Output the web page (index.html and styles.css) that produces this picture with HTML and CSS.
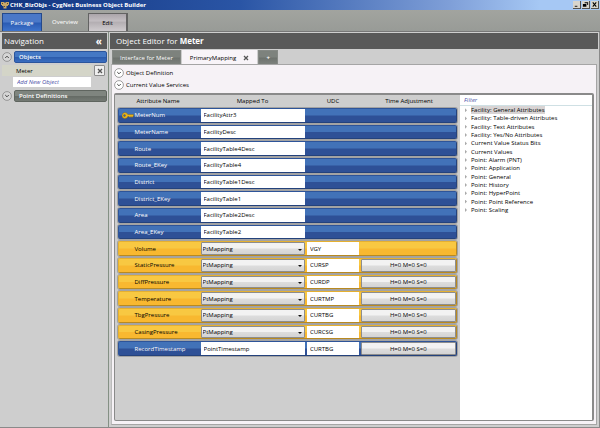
FILE: index.html
```
<!DOCTYPE html>
<html lang="en">
    <head>
        <meta charset="utf-8">
        <title>CHK_BizObjs - CygNet Business Object Builder</title>
        <link rel="stylesheet" href="styles.css">
    </head>
    <body>
        <header class="titlebar">
            <svg class="appicon" viewBox="0 0 8 8"><path d="M0 1h3.500v3H0zM4.500 1H8v3H4.500zM3 2h2v2H3zM1 4h6v1H5.500v2.500h-3V5H1z" fill="#c9a868"/><path d="M1 2h1v1H1zM6 2h1v1H6zM3 5h1v1H3z" fill="#6b4a2a"/></svg>
            <h1>CHK_BizObjs - CygNet Business Object Builder</h1>
            <div class="winbuttons">
                <button type="button" aria-label="Minimize"><svg viewBox="0 0 8 7"><path d="M2 5h3v1H2z"/></svg></button>
                <button type="button" aria-label="Restore"><svg viewBox="0 0 8 7"><path d="M3 1h4v3H6V2H3zM1 3h4v3H1z"/></svg></button>
                <button type="button" aria-label="Close"><svg viewBox="0 0 8 7"><path d="M2 1l4 5M6 1L2 6" stroke="#000" stroke-width="1.2"/></svg></button>
            </div>
        </header>
        <nav class="menu">
            <button type="button" class="package">Package</button>
            <button type="button">Overview</button>
            <button type="button" class="current">Edit</button>
        </nav>
        <div class="work">
            <aside class="navigation">
                <h2 class="heading">Navigation <button type="button" class="collapse" aria-label="Collapse">«</button></h2>
                <div class="navbody">
                    <div class="group">
                        <svg class="round" viewBox="0 0 10 10"><circle cx="5" cy="5" r="4.4"/><path d="M3.2 6L5 4.2 6.8 6"/></svg>
                        <button type="button" class="bar blue">Objects</button>
                    </div>
                    <div class="object">
                        <span>Meter</span>
                        <button type="button" aria-label="Remove Meter"><svg class="cross" viewBox="0 0 6 6"><path d="M1 1l4 4M5 1L1 5"/></svg></button>
                    </div>
                    <input class="addnew" type="text" placeholder="Add New Object" aria-label="Add New Object">
                    <div class="group">
                        <svg class="round" viewBox="0 0 10 10"><circle cx="5" cy="5" r="4.4"/><path d="M3.2 4L5 5.8 6.8 4"/></svg>
                        <button type="button" class="bar gray">Point Definitions</button>
                    </div>
                </div>
            </aside>
            <main class="editor">
                <h2 class="heading">Object Editor for&nbsp;<b>Meter</b></h2>
                <div class="tabs">
                    <button type="button" class="tab">Interface for Meter</button>
                    <button type="button" class="tab active">PrimaryMapping <svg class="cross" viewBox="0 0 6 6"><path d="M1 1l4 4M5 1L1 5"/></svg></button>
                    <button type="button" class="tab add">+</button>
                </div>
                <div class="panel">
                    <button type="button" class="expander"><svg class="round" viewBox="0 0 10 10"><circle cx="5" cy="5" r="4.4"/><path d="M3.2 4L5 5.8 6.8 4"/></svg>Object Definition</button>
                    <button type="button" class="expander"><svg class="round" viewBox="0 0 10 10"><circle cx="5" cy="5" r="4.4"/><path d="M3.2 4L5 5.8 6.8 4"/></svg>Current Value Services</button>
                    <div class="box">
                        <table class="mapping">
                            <thead>
                                <tr><th>Attribute Name</th><th>Mapped To</th><th>UDC</th><th>Time Adjustment</th></tr>
                            </thead>
                            <tbody>
                                <tr class="fac"><td><svg class="key" viewBox="0 0 12 7"><path d="M3 .5a3 3 0 1 0 2.800 4H7l1 1 1-1 1 1 1.500-1.500V2.500H5.800A3 3 0 0 0 3 .5zM2.500 2.500a1 1 0 1 1 0 2 1 1 0 0 1 0-2z" fill="#e9b51c" stroke="#7b5c14" stroke-width=".4" fill-rule="evenodd"/></svg><label for="m1">MeterNum</label></td><td><input id="m1" type="text" value="FacilityAttr3"></td><td></td><td></td></tr>
                                <tr class="fac"><td><label for="m2">MeterName</label></td><td><input id="m2" type="text" value="FacilityDesc"></td><td></td><td></td></tr>
                                <tr class="fac"><td><label for="m3">Route</label></td><td><input id="m3" type="text" value="FacilityTable4Desc"></td><td></td><td></td></tr>
                                <tr class="fac"><td><label for="m4">Route_EKey</label></td><td><input id="m4" type="text" value="FacilityTable4"></td><td></td><td></td></tr>
                                <tr class="fac"><td><label for="m5">District</label></td><td><input id="m5" type="text" value="FacilityTable1Desc"></td><td></td><td></td></tr>
                                <tr class="fac"><td><label for="m6">District_EKey</label></td><td><input id="m6" type="text" value="FacilityTable1"></td><td></td><td></td></tr>
                                <tr class="fac"><td><label for="m7">Area</label></td><td><input id="m7" type="text" value="FacilityTable2Desc"></td><td></td><td></td></tr>
                                <tr class="fac"><td><label for="m8">Area_EKey</label></td><td><input id="m8" type="text" value="FacilityTable2"></td><td></td><td></td></tr>
                                <tr class="pt"><td><label for="m9">Volume</label></td><td class="drop"><select id="m9"><option>PtMapping</option></select></td><td><input type="text" value="VGY" aria-label="Volume UDC"></td><td></td></tr>
                                <tr class="pt"><td><label for="m10">StaticPressure</label></td><td class="drop"><select id="m10"><option>PtMapping</option></select></td><td><input type="text" value="CURSP" aria-label="StaticPressure UDC"></td><td><button type="button">H=0 M=0 S=0</button></td></tr>
                                <tr class="pt"><td><label for="m11">DiffPressure</label></td><td class="drop"><select id="m11"><option>PtMapping</option></select></td><td><input type="text" value="CURDP" aria-label="DiffPressure UDC"></td><td><button type="button">H=0 M=0 S=0</button></td></tr>
                                <tr class="pt"><td><label for="m12">Temperature</label></td><td class="drop"><select id="m12"><option>PtMapping</option></select></td><td><input type="text" value="CURTMP" aria-label="Temperature UDC"></td><td><button type="button">H=0 M=0 S=0</button></td></tr>
                                <tr class="pt"><td><label for="m13">TbgPressure</label></td><td class="drop"><select id="m13"><option>PtMapping</option></select></td><td><input type="text" value="CURTBG" aria-label="TbgPressure UDC"></td><td><button type="button">H=0 M=0 S=0</button></td></tr>
                                <tr class="pt"><td><label for="m14">CasingPressure</label></td><td class="drop"><select id="m14"><option>PtMapping</option></select></td><td><input type="text" value="CURCSG" aria-label="CasingPressure UDC"></td><td><button type="button">H=0 M=0 S=0</button></td></tr>
                                <tr class="fac"><td><label for="m15">RecordTimestamp</label></td><td><input id="m15" type="text" value="PointTimestamp"></td><td><input type="text" value="CURTBG" aria-label="RecordTimestamp UDC"></td><td><button type="button">H=0 M=0 S=0</button></td></tr>
                            </tbody>
                        </table>
                        <div class="attributes">
                            <input class="filter" type="text" placeholder="Filter" aria-label="Filter">
                            <ul class="tree">
                                <li><span class="selected">Facility: General Attributes</span></li>
                                <li><span>Facility: Table-driven Attributes</span></li>
                                <li><span>Facility: Text Attributes</span></li>
                                <li><span>Facility: Yes/No Attributes</span></li>
                                <li><span>Current Value Status Bits</span></li>
                                <li><span>Current Values</span></li>
                                <li><span>Point: Alarm (PNT)</span></li>
                                <li><span>Point: Application</span></li>
                                <li><span>Point: General</span></li>
                                <li><span>Point: History</span></li>
                                <li><span>Point: HyperPoint</span></li>
                                <li><span>Point: Point Reference</span></li>
                                <li><span>Point: Scaling</span></li>
                            </ul>
                        </div>
                    </div>
                </div>
            </main>
        </div>
    </body>
</html>
```

FILE: styles.css
```
* {
    box-sizing: border-box;
}

body {
    margin: 0;
    min-height: 100vh;
    display: flex;
    flex-direction: column;
    background: #cecece;
    color: #000;
    font: 6px/8px "Open Sans", "Noto Sans", sans-serif;
}

h1, h2, ul {
    margin: 0;
    padding: 0;
    font-size: inherit;
}

button, input, select {
    margin: 0;
    padding: 0;
    border: 0;
    border-radius: 0;
    outline: 0;
    min-width: 0;
    font: inherit;
    color: inherit;
    background: none;
}

svg {
    display: block;
    flex: none;
}

/* title bar */
.titlebar {
    display: flex;
    align-items: center;
    height: 10px;
    padding: 0 1px;
    color: #fff;
    background: linear-gradient(90deg, #123580, #2a55a5 40%, #7f9fd8 75%, #a6c8f4 90%);
}

.appicon {
    width: 8px;
    height: 8px;
    margin-right: 1px;
}

.titlebar h1 {
    flex: 1;
}

.winbuttons {
    display: flex;
    gap: 1px;
}

.winbuttons button {
    width: 8px;
    height: 8px;
    background: #d8d5cc;
    border-right: 1px solid #55524c;
    border-bottom: 1px solid #55524c;
}

.winbuttons svg {
    width: 7px;
    height: 7px;
}

/* top menu */
.menu {
    display: flex;
    gap: 3px;
    height: 22px;
    padding: 3px 2px 0;
    background: linear-gradient(#a2a49f, #989b97);
    border-bottom: 1px solid #777;
}

.menu button {
    width: 40px;
    color: #fff;
}

.menu .package {
    background: linear-gradient(#4a78c8 45%, #2b5cb4 55%, #3f74cc);
    border: 1px solid #24498c;
    border-bottom: 0;
}

.menu .current {
    color: #000;
    background: linear-gradient(#aba5aa, #c2bdc1 40%, #b4afb3 50%, #cfcbce);
    border: 1px solid #636363;
    border-width: 1px 2px 0 1px;
}

/* work area */
.work {
    flex: 1;
    display: flex;
    border: solid #8a8a8a;
    border-width: 0 1px 1px 0;
}

.navigation {
    flex: none;
    width: 109px;
    padding: 1px 1px 0 2px;
    border-right: 1px solid #849084;
}

.heading {
    display: flex;
    align-items: center;
    height: 16px;
    color: #fff;
    background: #595959;
    font-size: 8px;
    font-weight: normal;
}

.navigation .heading {
    justify-content: space-between;
    padding: 0 5px 0 2px;
}

.collapse {
    font-size: 10px;
    font-weight: bold;
}

.navbody {
    padding-top: 2px;
}

.group {
    display: flex;
    align-items: center;
    gap: 2px;
}

.round {
    width: 10px;
    height: 10px;
    fill: #d6d6d6;
    stroke: #888;
    stroke-width: .8;
}

.round path {
    fill: none;
    stroke: #222;
}

.bar {
    flex: 1;
    height: 12px;
    padding-left: 4px;
    text-align: left;
    color: #fff;
    font-weight: 600;
    border-radius: 2px;
}

.blue {
    background: linear-gradient(#4478c4 45%, #2c5cac 55%, #3a6ec0);
    border: 1px solid #2b559c;
}

.gray {
    background: linear-gradient(#7f857f 45%, #666c66 55%, #747a74);
    border: 1px solid #5f655f;
}

.object {
    display: flex;
    align-items: center;
    justify-content: space-between;
    height: 11px;
    margin-top: 2px;
    padding: 0 2px 0 14px;
    background: linear-gradient(90deg, #d4d5c8 84%, #cecece 88%);
}

.object button {
    display: grid;
    place-items: center;
    width: 11px;
    height: 11px;
    border: 1px solid #8c8c8c;
    border-radius: 1px;
    background: #eee;
}

.cross {
    width: 6px;
    height: 6px;
    stroke: #555;
    stroke-width: 1.3;
}

.addnew {
    display: block;
    width: 78px;
    height: 10px;
    margin: 1px 0 3px 11px;
    padding: 0 4px;
    background: #fff;
}

::placeholder {
    color: #4c50a8;
    font-style: italic;
    opacity: 1;
}

/* editor */
.editor {
    flex: 1;
    display: flex;
    flex-direction: column;
    padding: 1px 1px 2px;
    min-width: 0;
}

.editor .heading {
    padding: 0 6px;
}

.tabs {
    display: flex;
    gap: 1px;
    margin-top: 1px;
    padding: 0 2px;
}

.tab {
    height: 14px;
    padding: 0 7px;
    color: #fff;
    background: linear-gradient(#7d827d 45%, #6e736e 55%, #7c817c);
    border: 1px solid #858985;
    border-bottom: 0;
}

.active {
    display: flex;
    align-items: center;
    gap: 7px;
    color: #000;
    background: #f8f4f8;
    border-color: #f8f4f8;
}

.add {
    width: 20px;
    font-weight: bold;
}

.panel {
    flex: 1;
    display: flex;
    flex-direction: column;
    align-items: flex-start;
    gap: 2px;
    margin: 0 1px;
    padding: 3px 2px;
    background: #f6f2f6;
    border: 1px solid #a5a5a5;
    border-left-color: #bbb;
}

.expander {
    display: flex;
    align-items: center;
    gap: 2px;
    height: 10px;
}

.expander .round {
    fill: #fff;
}

.box {
    flex: 1;
    align-self: stretch;
    display: flex;
    margin-top: 1px;
    background: #cecece;
    border: 1px solid #8a8a8a;
    border-width: 2px 2px 1px 1px;
    border-radius: 2px;
}

/* mapping table, rows are laid out as grids so they can share the height */
.mapping {
    flex: 1;
    display: block;
    padding: 0 3px;
}

.mapping thead, .mapping td, .mapping th {
    display: block;
    padding: 0;
}

.mapping tr {
    display: grid;
    grid-template-columns: 80fr 105fr 52fr 96fr;
    gap: 2px;
}

.mapping th {
    height: 13px;
    font-weight: normal;
    line-height: 13px;
}

.mapping tbody {
    display: flex;
    flex-direction: column;
    gap: 2px;
    height: 248px;
}

.mapping tbody tr {
    flex: 1;
    border-radius: 2px;
    border: 1px solid;
}

.mapping .fac {
    color: #fff;
    background: linear-gradient(#4272b8 48%, #2e5096 52%);
    border-color: #2e5499 #24427c #24427c #2e5499;
    box-shadow: 0 0 0 1px #a3a3a3;
}

.mapping .pt {
    background: linear-gradient(#f8c842 48%, #f8b830 52%);
    border-color: #e5b030 #b98a20 #b98a20 #e5b030;
    box-shadow: 0 0 0 1px #a3a3a3;
}

.mapping td {
    display: flex;
    align-items: stretch;
    min-width: 0;
}

.mapping td:first-child {
    align-items: center;
    justify-content: flex-end;
}

.mapping label {
    width: 64px;
}

.key {
    width: 12px;
    height: 7px;
    margin-right: 1px;
}

.mapping input, .mapping select, .mapping button {
    width: 100%;
    color: #000;
}

.mapping input {
    padding: 0 3px;
    background: #fff;
}

.mapping select, .mapping button {
    appearance: none;
    background: linear-gradient(#f2f2f2 45%, #dcdcdc 55%, #d4d4d4);
    border: 1px solid #8d8d8d;
    border-radius: 1px;
}

.mapping select {
    padding: 0 1px;
}

.drop {
    position: relative;
}

.drop::after {
    content: "";
    position: absolute;
    right: 3px;
    top: 50%;
    border: 2px solid transparent;
    border-top-color: #111;
    border-bottom: 0;
    pointer-events: none;
}

/* attribute tree */
.attributes {
    flex: none;
    width: 132px;
    background: #fff;
}

.filter {
    display: block;
    width: 100%;
    height: 11px;
    padding: 0 4px;
    border-bottom: 1px solid #cfe0e4;
}

.tree {
    display: flex;
    flex-direction: column;
    height: 108px;
    list-style: none;
}

.tree li {
    flex: 1;
    display: flex;
    align-items: center;
    gap: 4px;
    padding-left: 5px;
}

.tree li::before {
    content: "";
    width: 2px;
    height: 4px;
    background: #aaa;
    clip-path: polygon(0 0, 100% 50%, 0 100%);
}

.selected {
    background: #d8d4d4;
}
```
